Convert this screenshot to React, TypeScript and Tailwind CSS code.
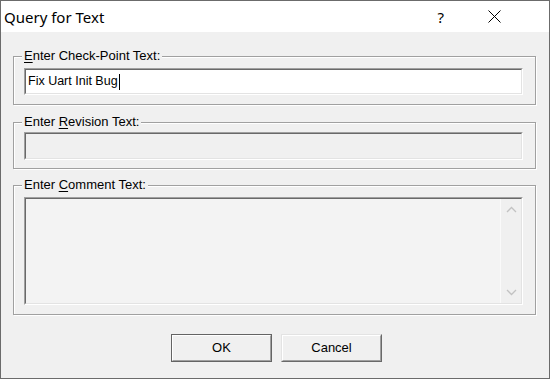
import React from "react";

const ui = { fontFamily: '"Liberation Sans", Arial, sans-serif' };

function GroupBox({
  label,
  hot,
  rest,
  className,
  children,
}: {
  label: string;
  hot: string;
  rest: string;
  className: string;
  children: React.ReactNode;
}) {
  return (
    <div
      className={`relative border border-[#a0a0a0] shadow-[inset_1px_1px_0_#fff,1px_1px_0_#fff] ${className}`}
    >
      <span className="absolute left-[8px] top-[-8px] bg-[#f0f0f0] px-[2px] text-[13px] leading-[14px] text-black">
        {label}
        <span className="underline underline-offset-[2px]">{hot}</span>
        {rest}
      </span>
      {children}
    </div>
  );
}

function Sunken({
  className,
  inner,
  children,
}: {
  className: string;
  inner: string;
  children?: React.ReactNode;
}) {
  return (
    <div
      className={`border border-t-[#a0a0a0] border-l-[#a0a0a0] border-b-white border-r-white ${className}`}
    >
      <div
        className={`h-full border border-t-[#696969] border-l-[#696969] border-b-[#e3e3e3] border-r-[#e3e3e3] ${inner}`}
      >
        {children}
      </div>
    </div>
  );
}

function Chevron({ up }: { up?: boolean }) {
  return (
    <svg width="11" height="7" viewBox="0 0 11 7" className="block">
      <path
        d={up ? "M1 6 L5.5 1.5 L10 6" : "M1 1 L5.5 5.5 L10 1"}
        fill="none"
        stroke="#c2c2c2"
        strokeWidth="1.3"
      />
    </svg>
  );
}

export default function App() {
  return (
    <div
      className="flex h-[379px] w-[550px] flex-col border border-[#6b6b6b] bg-[#f0f0f0]"
      style={ui}
    >
      {/* Title bar */}
      <div className="flex h-[31px] shrink-0 items-center bg-white">
        <span
          className="pl-[3px] text-[15px] leading-[20px] text-black"
          style={{ fontFamily: '"Noto Sans", "Open Sans", sans-serif' }}
        >
          Query for Text
        </span>
        <span
          className="ml-auto mr-[44px] text-[15px] leading-[20px] text-black"
          style={{ fontFamily: '"Noto Sans", sans-serif' }}
        >
          ?
        </span>
        <svg width="13" height="13" viewBox="0 0 13 13" className="mr-[48px]">
          <path d="M0.5 0.5 L12.5 12.5 M12.5 0.5 L0.5 12.5" stroke="#000" strokeWidth="1" />
        </svg>
      </div>

      {/* Body */}
      <div className="flex flex-1 flex-col px-[12px] pt-[24px]">
        <GroupBox
          label=""
          hot="E"
          rest="nter Check-Point Text:"
          className="h-[49px] w-[523px] pl-[10px] pt-[11px]"
        >
          <Sunken className="h-[27px] w-[499px]" inner="bg-white">
            <div className="flex h-full items-center pl-[2px] text-[12.5px] leading-[15px] text-black">
              Fix Uart Init Bug
              <span className="ml-[1px] inline-block h-[16px] w-[1px] bg-black" />
            </div>
          </Sunken>
        </GroupBox>

        <GroupBox
          label="Enter "
          hot="R"
          rest="evision Text:"
          className="mt-[17px] h-[47px] w-[523px] pl-[10px] pt-[9px]"
        >
          <Sunken className="h-[28px] w-[499px]" inner="bg-[#f0f0f0]" />
        </GroupBox>

        <GroupBox
          label="Enter "
          hot="C"
          rest="omment Text:"
          className="mt-[16px] h-[130px] w-[523px] pl-[10px] pt-[11px]"
        >
          <Sunken className="h-[108px] w-[499px]" inner="bg-[#f3f3f3] flex">
            <div className="flex-1" />
            <div className="flex w-[21px] flex-col items-center justify-between border-l border-l-[#fafafa] bg-[#f0f0f0] py-[7px]">
              <Chevron up />
              <Chevron />
            </div>
          </Sunken>
        </GroupBox>

        {/* Buttons */}
        <div className="mt-[19px] flex gap-[9px] pl-[158px]">
          <div className="h-[28px] w-[101px] border border-[#646464]">
            <div className="flex h-full items-center justify-center border border-t-white border-l-white border-b-[#a0a0a0] border-r-[#a0a0a0] text-[13px] text-black">
              OK
            </div>
          </div>
          <div className="h-[28px] w-[101px] border border-t-[#e3e3e3] border-l-[#e3e3e3] border-b-[#696969] border-r-[#696969]">
            <div className="flex h-full items-center justify-center border border-t-white border-l-white border-b-[#a0a0a0] border-r-[#a0a0a0] text-[13px] text-black">
              Cancel
            </div>
          </div>
        </div>
      </div>
    </div>
  );
}
